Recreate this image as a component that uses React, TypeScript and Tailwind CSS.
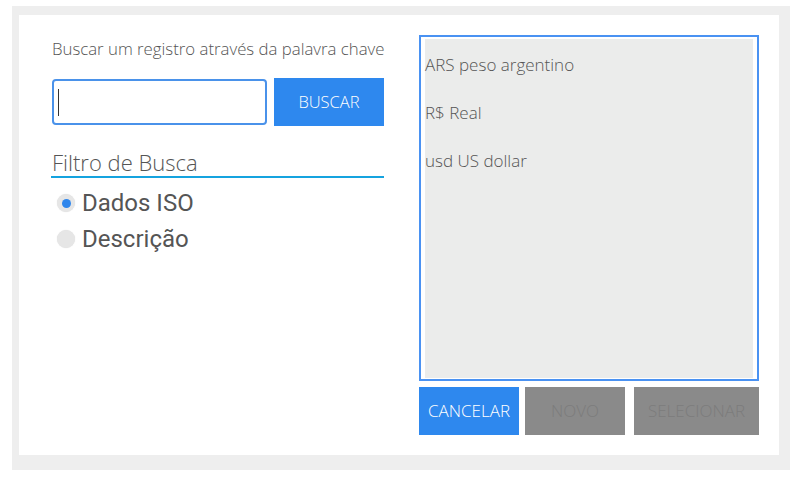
import { useState } from "react";

const moedas = ["ARS peso argentino", "R$ Real", "usd US dollar"];

export default function App() {
    const [filtro, setFiltro] = useState<"iso" | "desc">("iso");

    const radio = (id: "iso" | "desc", label: string) => (
        <button
            onClick={() => setFiltro(id)}
            className="flex items-center h-[36px] text-[24px] text-[#555] leading-none font-['Roboto',sans-serif] font-normal"
        >
            <span className="ml-[5px] mr-[7px] w-[18px] h-[18px] rounded-full bg-[#e6e6e6] shadow-[0_0_1px_rgba(0,0,0,0.15)] flex items-center justify-center">
                {filtro === id && <span className="w-[9px] h-[9px] rounded-full bg-[#2f86ec]" />}
            </span>
            {label}
        </button>
    );

    return (
        <div className="w-[799px] h-[480px] bg-white pt-[6px] pl-[12px] font-['Open_Sans',sans-serif] font-light">
            <div className="w-[778px] h-[464px] bg-[#eeeeee] pt-[9px] pl-[7px]">
                <div className="w-[760px] h-[440px] bg-white flex pl-[33px] pr-[20px] pt-[20px]">
                    {/* coluna esquerda */}
                    <div className="w-[332px] flex flex-col">
                        <p className="text-[16.8px] text-[#555] leading-[24px] mt-[2px] whitespace-nowrap">
                            Buscar um registro através da palavra chave
                        </p>
                        <div className="flex mt-[17px] h-[48px] items-center">
                            <div className="w-[215px] h-[46px] border-2 border-[#4a92ea] rounded-[4px] flex items-center pl-[4px]">
                                <span className="w-px h-[27px] bg-[#333]" />
                            </div>
                            <button className="ml-[7px] w-[110px] h-[48px] bg-[#2e88ee] text-white text-[16.5px] font-light">
                                BUSCAR
                            </button>
                        </div>
                        <div className="mt-[22px] border-b-2 border-[#15a3df] h-[30px] text-[22px] text-[#555] leading-[28px] -ml-px pl-px">
                            Filtro de Busca
                        </div>
                        <div className="flex flex-col mt-[7px]">
                            {radio("iso", "Dados ISO")}
                            {radio("desc", "Descrição")}
                        </div>
                    </div>

                    {/* coluna direita */}
                    <div className="ml-[35px] w-[340px] flex flex-col">
                        <div className="h-[346px] border-2 border-[#4a92f2] pt-[2px] px-[4px] pb-[1px] bg-white">
                            <ul className="h-full bg-[#ebeceb] text-[17px] text-[#555]">
                                {moedas.map((m) => (
                                    <li key={m} className="h-[48px] flex items-center pt-[4px]">
                                        {m}
                                    </li>
                                ))}
                            </ul>
                        </div>
                        <div className="flex mt-[6px] h-[48px] text-[17px]">
                            <button className="w-[100px] bg-[#2e88ee] text-white font-light">CANCELAR</button>
                            <button className="ml-[6px] w-[100px] bg-[#8a8a8a] text-[#7c7c7c] font-light">NOVO</button>
                            <button className="ml-[9px] w-[125px] bg-[#8a8a8a] text-[#7c7c7c] font-light">SELECIONAR</button>
                        </div>
                    </div>
                </div>
            </div>
        </div>
    );
}
